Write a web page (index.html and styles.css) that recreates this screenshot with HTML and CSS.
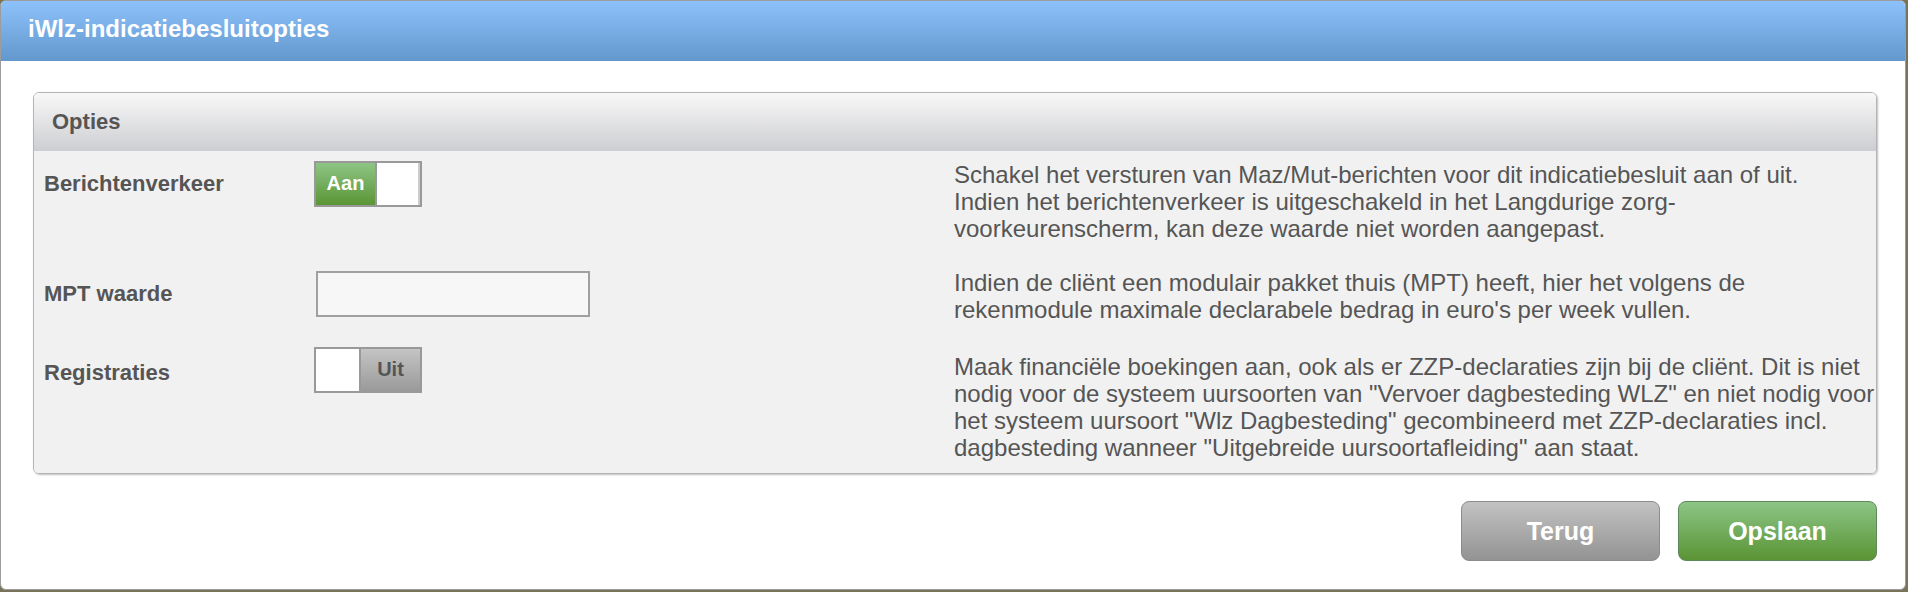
FILE: index.html
```html
<!DOCTYPE html>
<html lang="nl">
<head>
  <meta charset="UTF-8" />
  <meta name="viewport" content="width=device-width, initial-scale=1" />
  <title>iWlz-indicatiebesluitopties</title>
  <link rel="stylesheet" href="styles.css">
</head>
<body>
  <div class="dialog">
    <div class="dialog-header">iWlz-indicatiebesluitopties</div>

    <div class="dialog-body">
      <div class="panel">
        <div class="panel-header">Opties</div>

        <div class="panel-body">
          <div class="option-row">
            <div class="option-label">Berichtenverkeer</div>
            <div class="option-control">
              <div class="toggle on">
                <span class="toggle-state">Aan</span>
                <span class="toggle-knob"></span>
              </div>
            </div>
            <p class="option-help">Schakel het versturen van Maz/Mut-berichten voor dit indicatiebesluit aan of uit.<br>Indien het berichtenverkeer is uitgeschakeld in het Langdurige zorg-voorkeurenscherm, kan deze waarde niet worden aangepast.</p>
          </div>

          <div class="option-row">
            <div class="option-label">MPT waarde</div>
            <div class="option-control">
              <input type="text" class="text-input" id="mpt-waarde">
            </div>
            <p class="option-help">Indien de cliënt een modulair pakket thuis (MPT) heeft, hier het volgens de rekenmodule maximale declarabele bedrag in euro's per week vullen.</p>
          </div>

          <div class="option-row">
            <div class="option-label">Registraties</div>
            <div class="option-control">
              <div class="toggle off">
                <span class="toggle-knob"></span>
                <span class="toggle-state">Uit</span>
              </div>
            </div>
            <p class="option-help">Maak financiële boekingen aan, ook als er ZZP-declaraties zijn bij de cliënt. Dit is niet nodig voor de systeem uursoorten van "Vervoer dagbesteding WLZ" en niet nodig voor het systeem uursoort "Wlz Dagbesteding" gecombineerd met ZZP-declaraties incl. dagbesteding wanneer "Uitgebreide uursoortafleiding" aan staat.</p>
          </div>
        </div>
      </div>

      <div class="button-bar">
        <button class="btn btn-grey">Terug</button>
        <button class="btn btn-green">Opslaan</button>
      </div>
    </div>
  </div>
</body>
</html>
```

FILE: styles.css
```css
body {
  margin: 0;
  padding: 0;
  background-color: #77745a;
  font-family: "Liberation Sans", Arial, sans-serif;
}

.dialog {
  width: 1904px;
  height: 588px;
  background: #fff;
  border: 1px solid #9c9c9c;
  border-radius: 6px;
  overflow: hidden;
}

.dialog-header {
  height: 60px;
  line-height: 56px;
  padding-left: 27px;
  background: linear-gradient(#8cc1fb, #6398cd);
  color: #fff;
  font-size: 24px;
  font-weight: bold;
}

.dialog-body {
  padding: 31px 28px 0 32px;
}

.panel {
  border: 1px solid #b4b4b4;
  border-radius: 6px;
  overflow: hidden;
  box-shadow: 1px 1px 2px rgba(0, 0, 0, 0.25);
}

.panel-header {
  height: 58px;
  line-height: 58px;
  padding-left: 18px;
  background: linear-gradient(#f8f8f8, #cdced2);
  color: #555;
  font-size: 22px;
  font-weight: bold;
}

.panel-body {
  background-color: #f1f1f1;
  padding: 10px 0 12px 0;
}

.option-row {
  display: grid;
  grid-template-columns: 270px 640px 1fr;
  padding-left: 10px;
  margin-bottom: 27px;
}

.option-row:last-child {
  margin-bottom: 0;
}

.option-label {
  color: #555;
  font-size: 22px;
  font-weight: bold;
  line-height: 46px;
}

.option-row:nth-child(2) .option-label {
  line-height: 50px;
}

.option-help {
  margin: 0;
  width: 925px;
  color: #555;
  font-size: 24px;
  line-height: 27px;
}

.option-row:last-child .option-help {
  padding-top: 3px;
}

.toggle {
  display: flex;
  width: 104px;
  height: 42px;
  border: 2px solid #999;
  background: #999;
  gap: 2px;
}

.toggle-state {
  width: 59px;
  text-align: center;
  line-height: 40px;
  font-size: 20px;
  font-weight: bold;
}

.toggle-knob {
  flex: 1;
  background: #fff;
}

.toggle.on .toggle-state {
  background: linear-gradient(#8dc585, #5b9535);
  color: #fff;
}

.toggle.on .toggle-knob {
  border-right: 2px solid #ccc;
}

.toggle.off .toggle-state {
  background: linear-gradient(#c4c4c4, #9a9a9a);
  color: #555;
}

.toggle.off {
  margin-top: -3px;
}

.text-input {
  width: 274px;
  height: 46px;
  margin-top: 2px;
  margin-left: 2px;
  box-sizing: border-box;
  border: 2px solid #a0a0a0;
  background: #f7f7f7;
  font-size: 20px;
  padding: 0 8px;
}

.button-bar {
  display: flex;
  justify-content: flex-end;
  gap: 18px;
  margin-top: 27px;
}

.btn {
  width: 199px;
  height: 60px;
  border-radius: 8px;
  color: #fff;
  font-family: "Liberation Sans", Arial, sans-serif;
  font-size: 25px;
  font-weight: bold;
  cursor: pointer;
}

.btn-grey {
  background: linear-gradient(#c2c2c2, #939393);
  border: 1px solid #8c8c8c;
}

.btn-green {
  background: linear-gradient(#8cc586, #5a9434);
  border: 1px solid #5e8a5a;
}
```
